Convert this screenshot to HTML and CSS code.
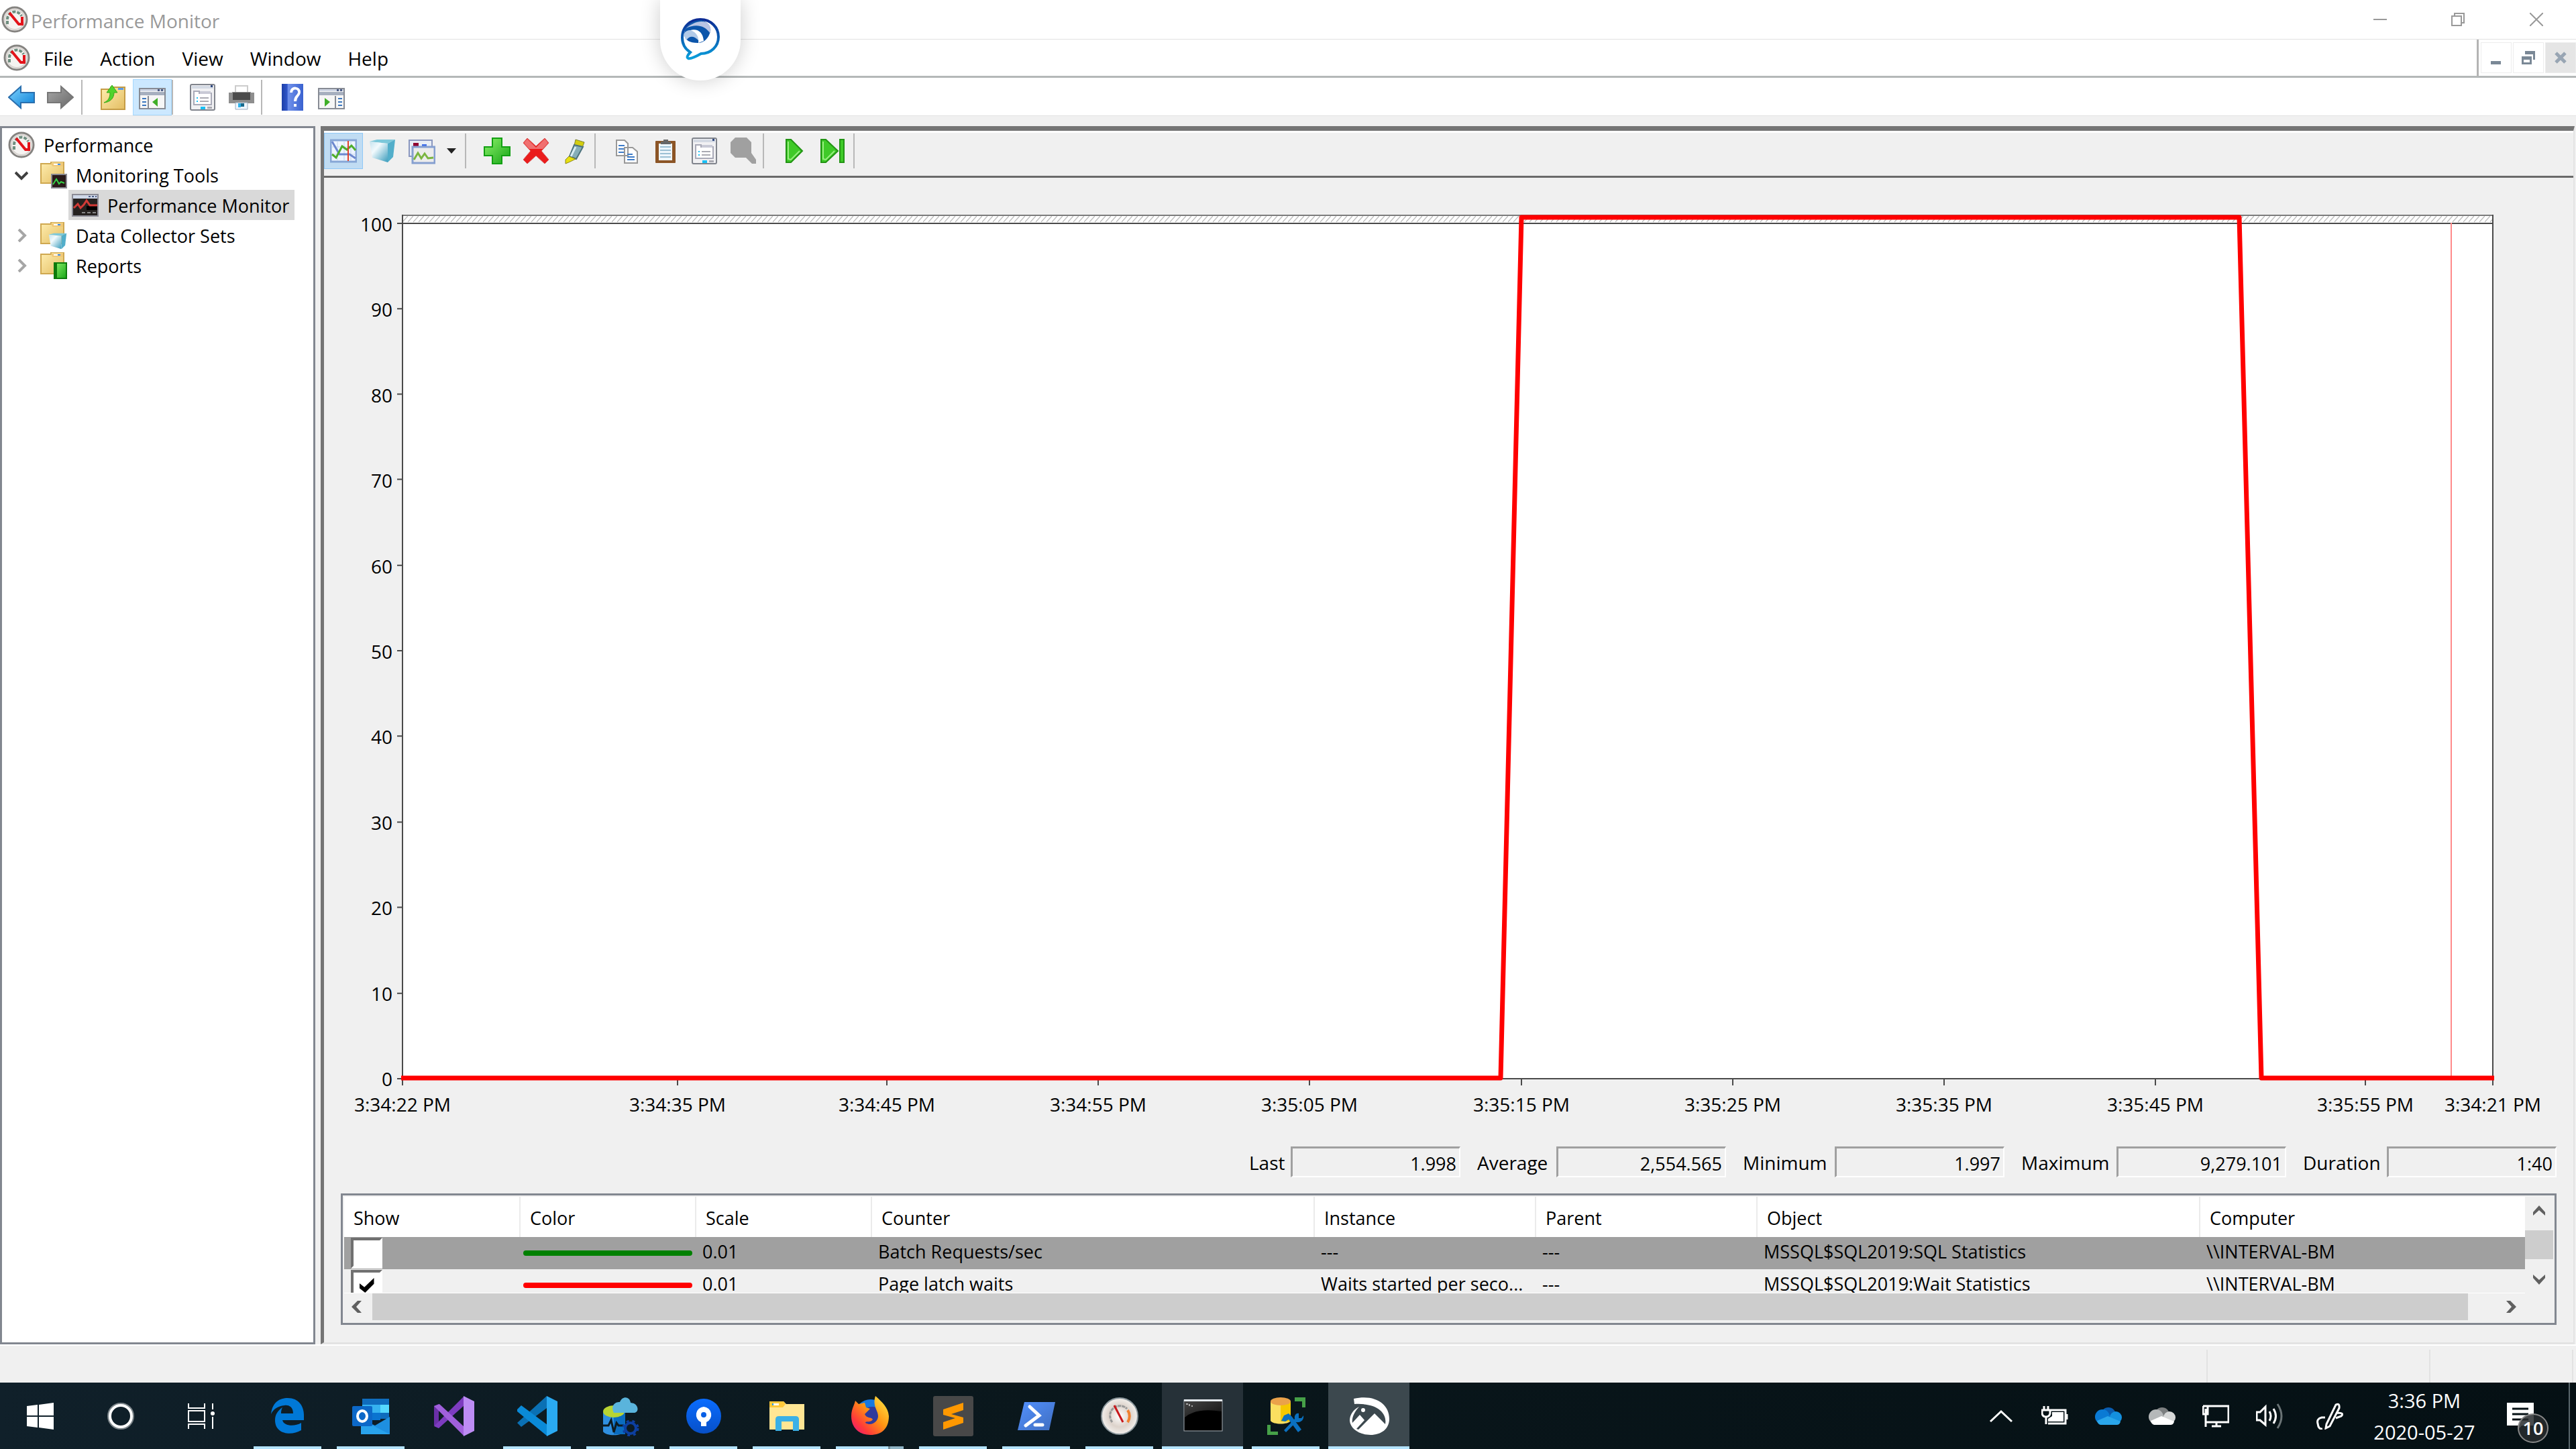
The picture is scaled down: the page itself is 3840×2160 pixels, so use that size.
FILE: index.html
```html
<!DOCTYPE html>
<html lang="en">
<head>
<meta charset="utf-8">
<title>Performance Monitor</title>
<link rel="stylesheet" href="styles.css">
</head>
<body>
<svg class="defs" aria-hidden="true">
  <defs>
    <linearGradient id="gFolder" x1="0" y1="0" x2="1" y2="1"><stop offset="0" stop-color="#ffeeb0"/><stop offset="1" stop-color="#e3bd62"/></linearGradient>
    <linearGradient id="gBlue" x1="0" y1="0" x2="1" y2="1"><stop offset="0" stop-color="#7fd4ff"/><stop offset="1" stop-color="#0a7fd6"/></linearGradient>
    <linearGradient id="gGray" x1="0" y1="0" x2="1" y2="1"><stop offset="0" stop-color="#a8a8a8"/><stop offset="1" stop-color="#686868"/></linearGradient>
    <linearGradient id="gGreen" x1="0" y1="0" x2="1" y2="1"><stop offset="0" stop-color="#8cf06a"/><stop offset="1" stop-color="#16a516"/></linearGradient>
    <linearGradient id="gCube" x1="0" y1="0" x2="1" y2="1"><stop offset="0" stop-color="#c4e2ee"/><stop offset=".35" stop-color="#f2fafd"/><stop offset="1" stop-color="#3a9cbc"/></linearGradient>
    <linearGradient id="gHelp" x1="0" y1="0" x2="1" y2="0"><stop offset="0" stop-color="#1d3fa8"/><stop offset=".25" stop-color="#2f55c8"/><stop offset=".3" stop-color="#6f90ea"/><stop offset="1" stop-color="#3a62d0"/></linearGradient>
    <linearGradient id="gSwirl" x1="0" y1="0" x2="0" y2="1"><stop offset="0" stop-color="#0c2b94"/><stop offset=".5" stop-color="#0a62b4"/><stop offset="1" stop-color="#0a9fdc"/></linearGradient>
    <linearGradient id="gSource" x1="0" y1="0" x2="0" y2="1"><stop offset="0" stop-color="#0a6cff"/><stop offset="1" stop-color="#0750c8"/></linearGradient>
    <linearGradient id="gFox" x1="1" y1="0" x2="0" y2="1"><stop offset="0" stop-color="#fff04a"/><stop offset=".45" stop-color="#ff9412"/><stop offset=".75" stop-color="#ff3a3a"/><stop offset="1" stop-color="#e0108c"/></linearGradient>
    <linearGradient id="gPs" x1="0" y1="0" x2="1" y2="1"><stop offset="0" stop-color="#5391fe"/><stop offset="1" stop-color="#3e6dbf"/></linearGradient>
    <linearGradient id="gCmd" x1="0" y1="0" x2="1" y2="1"><stop offset="0" stop-color="#444"/><stop offset="1" stop-color="#111"/></linearGradient>
    <radialGradient id="gDial"><stop offset="0" stop-color="#fff"/><stop offset=".6" stop-color="#ddd3cb"/><stop offset="1" stop-color="#f2efec"/></radialGradient>
    <symbol id="gauge" viewBox="0 0 40 40">
      <circle cx="20" cy="20" r="18" fill="#f5f3f1" stroke="#858380" stroke-width="3"/>
      <circle cx="20" cy="20" r="15" fill="none" stroke="#d8d4d0" stroke-width="2"/>
      <path d="M9 27V20A11 11 0 0 1 30 15" fill="none" stroke="#6f8f80" stroke-width="4" stroke-dasharray="5 2"/>
      <path d="M12 10L26 27H31V16" fill="none" stroke="#e3131a" stroke-width="4"/>
    </symbol>
    <symbol id="folder" viewBox="0 0 40 40">
      <path d="M1 3H16V0H35V32H1Z" fill="url(#gFolder)" stroke="#cfa850" stroke-width="2"/>
      <path d="M16 2H34V7H18Z" fill="#f0c878"/><path d="M20 3H30V5H20Z" fill="#fff"/><path d="M26 3H30V5H26Z" fill="#3b8ff0"/>
    </symbol>
    <symbol id="cube" viewBox="0 0 40 36">
      <path d="M1 4L12 1H39L28 7Z" fill="#7cc8da"/><path d="M1 4L28 7V35L5 28Z" fill="url(#gCube)"/><path d="M28 7L39 1L36 27L28 35Z" fill="#52aeca"/>
    </symbol>
    <symbol id="props" viewBox="0 0 38 40">
      <rect x="1" y="1" width="36" height="38" rx="2" fill="#f1f1f3" stroke="#80848c" stroke-width="2"/>
      <path d="M3 3H35V7H3Z" fill="#d4dae4"/><path d="M31 2H34V5H31Z" fill="#314a80"/>
      <path d="M6 11H14V14H32V31H6Z" fill="#fff" stroke="#a9aab8" stroke-width="2"/><path d="M15 11H31V15H15Z" fill="#c9cad6"/>
      <path d="M10 20H12V22H10ZM10 25H12V27H10ZM16 34H23V38H16Z" fill="#19c0f5"/><path d="M15 20H28V22H15ZM15 25H28V27H15ZM26 34H33V37H26Z" fill="#aaaab2"/>
    </symbol>
    <symbol id="console" viewBox="0 0 40 32">
      <rect x="1" y="1" width="38" height="30" fill="#f6f6f6" stroke="#878b94" stroke-width="2"/><path d="M2 2H38V5H2Z" fill="#cfd6e4"/><path d="M2 6H38V11H2Z" fill="#a6afbf"/><path d="M28 2H31V5H28ZM33 2H36V5H33Z" fill="#4b5c85"/>
    </symbol>
  </defs>
</svg>

<div class="assist" aria-hidden="true">
  <svg viewBox="0 0 60 66"><path d="M30 3C46 3 57 15 57 29S46 54 31 54C24 58 16 62 12 61C9 60 11 56 15 52C7 47 3 39 3 30C3 14 15 3 30 3Z" fill="#fff" stroke="url(#gSwirl)" stroke-width="4"/><path d="M8 17C14 8 22 4 32 4C42 8 46 13 45 21C42 31 36 38 26 38C14 38 7 34 6 25C6 22 7 19 8 17Z" fill="#0c55aa"/><path d="M9 16C20 6 36 2 43 11C46 16 46 20 44 23C37 12 23 9 9 16Z" fill="#b8c4e4"/><path d="M6 24C8 19 15 18 20 20C25 23 28 29 27 34C20 27 14 27 9 34C7 31 6 28 6 24Z" fill="#b2cae8"/><path d="M15 19C26 16 34 22 35 35L27 38C28 28 24 22 15 19Z" fill="#fff"/></svg>
</div>

<header class="titlebar">
  <svg class="i40"><use href="#gauge"/></svg>
  <h1 class="title">Performance Monitor</h1>
  <div class="winbtns">
    <button aria-label="Minimize"><svg viewBox="0 0 20 20"><path d="M0 10H20"/></svg></button>
    <button aria-label="Restore"><svg viewBox="0 0 20 20"><path d="M1 5H15V19H1ZM5 5V1H19V15H15"/></svg></button>
    <button aria-label="Close"><svg viewBox="0 0 20 20"><path d="M0 0L20 20M20 0L0 20"/></svg></button>
  </div>
</header>

<nav class="menubar">
  <svg class="i40"><use href="#gauge"/></svg>
  <div class="menus"><button>File</button><button>Action</button><button>View</button><button>Window</button><button>Help</button></div>
  <div class="mdi">
    <button aria-label="Minimize child"><svg viewBox="0 0 22 22"><path d="M3 16H18V21H3Z" fill="#7a8896"/></svg></button>
    <button aria-label="Restore child"><svg viewBox="0 0 22 22"><path d="M6 1H21V14H18V6H6ZM1 9H16V21H1ZM4 14V18H13V14Z" fill="#7a8896" fill-rule="evenodd"/></svg></button>
    <button class="off" aria-label="Close child"><svg viewBox="0 0 22 22"><path d="M4 4L18 18M18 4L4 18" stroke="#98a5b3" stroke-width="5"/></svg></button>
  </div>
</nav>

<div class="toolbar">
  <button class="tb" aria-label="Back"><svg viewBox="0 0 40 36"><path d="M1 18L19 2V11H39V26H19V34Z" fill="url(#gBlue)" stroke="#2a6fae" stroke-width="2"/></svg></button>
  <button class="tb" aria-label="Forward"><svg viewBox="0 0 40 36"><path d="M39 18L21 2V11H1V26H21V34Z" fill="url(#gGray)" stroke="#777" stroke-width="2"/></svg></button>
  <span class="sep lead"></span>
  <button class="tb up" aria-label="Up one level"><svg viewBox="0 0 40 40"><path d="M3 8H17V5H38V38H3Z" fill="url(#gFolder)" stroke="#c59c45" stroke-width="2"/><path d="M28 6H36V9H28Z" fill="#5a9be8"/><path d="M7 28C14 25 16 20 16 13H11L19 2L27 13H22C22 21 17 27 7 28Z" fill="#4fd32c" stroke="#38a818" stroke-width="1"/></svg></button>
  <button class="tb on" aria-label="Show or hide console tree"><svg viewBox="0 0 40 40"><use href="#console" y="6" width="40" height="32"/><path d="M14 18V37" stroke="#878b94" stroke-width="2"/><path d="M5 21H11V23H5ZM5 26H11V28H5ZM5 31H11V33H5Z" fill="#3c78c0"/><path d="M28 21V34L20 27Z" fill="#3fae28"/></svg></button>
  <span class="sep"></span>
  <button class="tb props" aria-label="Properties"><svg viewBox="0 0 38 40"><use href="#props"/></svg></button>
  <button class="tb" aria-label="Print"><svg viewBox="0 0 40 40"><path d="M11 3H29V14H11Z" fill="#fff" stroke="#ccc" stroke-width="2"/><path d="M1 13H6V12H34V13H39V29H1Z" fill="#8e8e8e"/><path d="M7 13H33V24H7Z" fill="#4b4b4b"/><path d="M11 28H29V38H11Z" fill="#eef6ff" stroke="#9ab" stroke-width="1"/><path d="M15 29H19V35H15Z" fill="#2fb0e8"/><path d="M19 29H24V34H19Z" fill="#18698c"/></svg></button>
  <span class="sep"></span>
  <button class="tb help" aria-label="Help"><svg viewBox="0 0 40 40"><path d="M4 0H36V40H4Z" fill="url(#gHelp)"/><path d="M18 13C18 4 31 5 30 13C29 19 24 18 24 26M24 30V34" fill="none" stroke="#fff" stroke-width="4"/></svg></button>
  <button class="tb" aria-label="Show or hide action pane"><svg viewBox="0 0 40 40"><use href="#console" y="6" width="40" height="32"/><path d="M26 18V37" stroke="#878b94" stroke-width="2"/><path d="M30 21H36V23H30ZM30 26H36V28H30ZM30 31H36V33H30Z" fill="#3c78c0"/><path d="M10 21V34L18 27Z" fill="#3fae28"/></svg></button>
</div>

<main class="main">
  <aside class="tree">
    <ul>
      <li><svg class="i40"><use href="#gauge"/></svg><span>Performance</span></li>
      <li class="l1"><svg class="chev" viewBox="0 0 20 20"><path d="M1 6L10 15L19 6" stroke="#404040"/></svg><svg class="i40" viewBox="0 0 40 40"><use href="#folder" width="40" height="40"/><rect x="17" y="19" width="22" height="20" fill="#2a1a1a" stroke="#8a8a92" stroke-width="2"/><path d="M19 34L24 26L28 33L31 30L36 32" fill="none" stroke="#35d046" stroke-width="2"/></svg><span>Monitoring Tools</span></li>
      <li class="l2"><a href="#chart" class="sel"><svg class="i40" viewBox="0 0 40 40"><rect x="1" y="4" width="38" height="32" fill="#262220" stroke="#8b8b95" stroke-width="2"/><path d="M2 5H38V10H2Z" fill="#cfd8e8"/><path d="M25 6H28V8H25ZM30 6H33V8H30ZM35 6H37V8H35Z" fill="#4b5c85"/><path d="M22 21H38V27H22Z" fill="#000"/><path d="M3 24L9 18L13 24L18 19L22 13L27 20H38" fill="none" stroke="#d33a36" stroke-width="3"/><path d="M15 30H20V32H15ZM23 30H28V32H23ZM31 30H36V32H31Z" fill="#888"/></svg><span>Performance Monitor</span></a></li>
      <li class="l1"><svg class="chev" viewBox="0 0 20 20"><path d="M6 1L15 10L6 19" stroke="#a6a6a6"/></svg><svg class="i40" viewBox="0 0 40 40"><use href="#folder" width="40" height="40"/><use href="#cube" x="12" y="16" width="28" height="25"/></svg><span>Data Collector Sets</span></li>
      <li class="l1"><svg class="chev" viewBox="0 0 20 20"><path d="M6 1L15 10L6 19" stroke="#a6a6a6"/></svg><svg class="i40" viewBox="0 0 40 40"><use href="#folder" width="40" height="40"/><rect x="21" y="16" width="18" height="23" fill="url(#gGreen)" stroke="#0c7a0c" stroke-width="2"/><path d="M21 16H25V39H21Z" fill="#0c7a0c"/></svg><span>Reports</span></li>
    </ul>
  </aside>

  <section class="pane" id="chart">
    <div class="ptools">
      <button class="tb on" aria-label="View current activity"><svg viewBox="0 0 40 40"><rect x="1" y="4" width="38" height="32" fill="#eef5ff" stroke="#86a6d6" stroke-width="3"/><path d="M11 5V35M21 5V35M31 5V35M2 14H38M2 25H38" stroke="#c3d3ec" stroke-width="1"/><path d="M3 6L14 25H29L38 31" fill="none" stroke="#6d88cf" stroke-width="3"/><path d="M3 25L9 30L18 13L25 18L32 12L38 19" fill="none" stroke="#4fae2c" stroke-width="3"/><path d="M27 5V35" stroke="#e2402a" stroke-width="2"/></svg></button>
      <button class="tb" aria-label="View log data"><svg viewBox="0 0 40 40"><use href="#cube" y="2" width="40" height="36"/></svg></button>
      <button class="tb wide" aria-label="Change graph type"><svg viewBox="0 0 40 40"><rect x="1" y="4" width="34" height="24" fill="#e8edf5" stroke="#8a97bf" stroke-width="2"/><path d="M7 8H15V14H7Z" fill="#900030"/><path d="M20 10H27V14H20Z" fill="#3f6ee8"/><rect x="6" y="14" width="33" height="24" fill="#ececec" stroke="#86a0d0" stroke-width="3"/><path d="M8 33L14 23L19 31L24 24L29 31L37 30" fill="none" stroke="#7ab540" stroke-width="3"/></svg><svg class="drop" viewBox="0 0 16 8"><path d="M1 0H15L8 8Z"/></svg></button>
      <span class="sep"></span>
      <button class="tb add" aria-label="Add"><svg viewBox="0 0 40 40"><path d="M13 1H27V14H39V27H27V39H13V27H1V14H13Z" fill="url(#gGreen)" stroke="#12a012" stroke-width="2"/></svg></button>
      <button class="tb" aria-label="Delete"><svg viewBox="0 0 40 40"><path d="M7 1L20 13L33 1L39 8L28 20L39 33L33 39L20 27L7 39L1 33L12 20L1 8Z" fill="#ea1c1c" stroke="#d85050" stroke-width="1"/><path d="M7 2L20 15L33 2L38 8L30 17H10L2 8Z" fill="#f07070"/></svg></button>
      <button class="tb" aria-label="Highlight"><svg viewBox="0 0 40 40"><path d="M21 3L34 7L31 15L19 12Z" fill="#d3cd10" stroke="#7d8430" stroke-width="1"/><path d="M19 11L32 14L22 32L12 28Z" fill="#86aeb8" stroke="#4c727c" stroke-width="2"/><path d="M21 14L14 28" stroke="#d8ecf2" stroke-width="3"/><path d="M11 28L21 32L13 36L6 39V33Z" fill="#e8e010" stroke="#8c8818" stroke-width="1"/></svg></button>
      <span class="sep"></span>
      <button class="tb copy" aria-label="Copy"><svg viewBox="0 0 40 40"><path d="M5 4H17L22 9V27H5ZM17 15H29L36 21V38H17Z" fill="#fff" stroke="#999" stroke-width="2"/><path d="M8 11H17V13H8ZM8 16H16V18H8ZM8 21H16V23H8ZM21 24H29V26H21ZM21 28H32V30H21ZM21 32H32V34H21Z" fill="#3e7cc8"/></svg></button>
      <button class="tb" aria-label="Paste"><svg viewBox="0 0 40 40"><rect x="5" y="5" width="30" height="33" rx="1" fill="#8c5526"/><path d="M10 9H30V34H10Z" fill="#eef6fb"/><path d="M12 14H28M12 19H28M12 24H28M12 29H28" stroke="#9cc0d4" stroke-width="2"/><path d="M13 10V6H17V3H24V6H28V10Z" fill="#666"/></svg></button>
      <button class="tb" aria-label="Properties"><svg viewBox="0 0 38 40"><use href="#props"/></svg></button>
      <button class="tb" aria-label="Zoom"><svg viewBox="0 0 40 40"><path d="M8 0H25L32 7V23L39 33V39H33L24 30H8L1 23V7Z" fill="#a0a0a0"/></svg></button>
      <span class="sep"></span>
      <button class="tb play" aria-label="Freeze or unfreeze display"><svg viewBox="0 0 40 40"><path d="M7 3H14L31 20L14 37H7Z" fill="#3fca28" stroke="#229414" stroke-width="2"/><path d="M10 6V32L14 33L27 20" fill="none" stroke="#98ee80" stroke-width="2"/></svg></button>
      <button class="tb" aria-label="Update data"><svg viewBox="0 0 40 40"><path d="M1 3H8L26 20L8 37H1ZM29 3H35V37H29Z" fill="#3fca28" stroke="#229414" stroke-width="2"/><path d="M4 6V32L8 33L21 20" fill="none" stroke="#98ee80" stroke-width="2"/></svg></button>
      <span class="sep"></span>
    </div>

    <div class="chart">
      <div class="yaxis"><span>100</span><span>90</span><span>80</span><span>70</span><span>60</span><span>50</span><span>40</span><span>30</span><span>20</span><span>10</span><span>0</span></div>
      <div class="plot">
        <svg viewBox="0 0 3116 1286" preserveAspectRatio="none">
          <defs><pattern id="hatch" width="8" height="12" patternUnits="userSpaceOnUse"><path d="M0 11L8 2" stroke="#a8a8a8" stroke-width="1"/></pattern></defs>
          <rect width="3116" height="1286" fill="#fff"/>
          <rect width="3116" height="12" fill="url(#hatch)"/>
          <path d="M0 1H3116" stroke="#7c7c7c" stroke-width="2"/>
          <path d="M0 0V1296M3116 0V1296M-8 13H3116M-8 1286H3116" class="axis"/>
          <path d="M-8 140H0M-8 267H0M-8 394H0M-8 522H0M-8 649H0M-8 776H0M-8 904H0M-8 1031H0M-8 1159H0" class="axis"/>
          <path d="M410 1286V1296M722 1286V1296M1037 1286V1296M1352 1286V1296M1668 1286V1296M1983 1286V1296M2298 1286V1296M2613 1286V1296M2926 1286V1296" class="axis"/>
          <path d="M3054 12V1286" stroke="#ff8a8a" stroke-width="2"/>
          <path d="M-2 1285H1637L1668 4H2738L2771 1285H3118" fill="none" stroke="#f00" stroke-width="7" stroke-linejoin="round"/>
        </svg>
      </div>
      <div class="xaxis"><span>3:34:22 PM</span><span>3:34:35 PM</span><span>3:34:45 PM</span><span>3:34:55 PM</span><span>3:35:05 PM</span><span>3:35:15 PM</span><span>3:35:25 PM</span><span>3:35:35 PM</span><span>3:35:45 PM</span><span>3:35:55 PM</span><span>3:34:21 PM</span></div>
    </div>

    <form class="stats">
      <label for="last">Last</label><input id="last" readonly value="1.998">
      <label for="avg">Average</label><input id="avg" readonly value="2,554.565">
      <label for="min">Minimum</label><input id="min" readonly value="1.997">
      <label for="max">Maximum</label><input id="max" readonly value="9,279.101">
      <label for="dur">Duration</label><input id="dur" readonly value="1:40">
    </form>

    <div class="legend">
      <div class="rows">
        <table>
          <colgroup><col class="c1"><col class="c1"><col class="c1"><col class="c3"><col class="c2"><col class="c2"><col class="c3"><col></colgroup>
          <thead><tr><th>Show</th><th>Color</th><th>Scale</th><th>Counter</th><th>Instance</th><th>Parent</th><th>Object</th><th>Computer</th></tr></thead>
          <tbody>
            <tr class="picked"><td class="show"><input type="checkbox" aria-label="Show Batch Requests/sec"></td><td class="swatch"><hr class="green"></td><td>0.01</td><td>Batch Requests/sec</td><td>---</td><td>---</td><td>MSSQL$SQL2019:SQL Statistics</td><td>\\INTERVAL-BM</td></tr>
            <tr><td class="show"><input type="checkbox" checked aria-label="Show Page latch waits"></td><td class="swatch"><hr class="red"></td><td>0.01</td><td>Page latch waits</td><td>Waits started per seco...</td><td>---</td><td>MSSQL$SQL2019:Wait Statistics</td><td>\\INTERVAL-BM</td></tr>
          </tbody>
        </table>
      </div>
      <div class="vbar"><svg viewBox="0 0 20 16"><path d="M1 15V10L10 0L19 10V15L10 7Z"/></svg><i></i><svg viewBox="0 0 20 16"><path d="M1 1V6L10 16L19 6V1L10 9Z"/></svg></div>
      <div class="hbar"><svg viewBox="0 0 16 20"><path d="M15 1H9L0 10L9 19H15L7 10Z"/></svg><i></i><svg viewBox="0 0 16 20"><path d="M1 1H7L16 10L7 19H1L9 10Z"/></svg></div>
    </div>
  </section>
</main>

<div class="status"><span></span><span></span><span></span></div>

<footer class="taskbar">
  <div class="sys">
    <button aria-label="Start"><svg viewBox="0 0 40 40"><path d="M0 5L16 3V19H0ZM18 3L40 0V19H18ZM0 21H16V37L0 35ZM18 21H40V40L18 37Z" fill="#fff"/></svg></button>
    <button aria-label="Cortana"><svg viewBox="0 0 40 40"><circle cx="20" cy="20" r="18" fill="none" stroke="#7c858a" stroke-width="4"/><circle cx="20" cy="20" r="16" fill="none" stroke="#fff" stroke-width="4"/></svg></button>
    <button aria-label="Task view"><svg viewBox="0 0 40 40"><path d="M1 1V8H25V1M1 12H25V28H1ZM1 39V32H25V39M37 1V10M37 21V39" fill="none" stroke="#fff" stroke-width="2"/><circle cx="37" cy="16" r="3" fill="#fff"/></svg></button>
  </div>
  <div class="apps">
    <button class="run" aria-label="Edge"><svg viewBox="0 0 60 60"><path d="M5 27C7 9 18 3 30 3C46 3 54 15 54 29V36H22C24 45 40 46 50 40V51C35 60 11 57 11 36C11 27 16 21 22 17C20 21 20 24 20 26H38C38 15 30 13 25 14C15 15 8 20 5 27Z" fill="#0078d7"/></svg></button>
    <button class="run" aria-label="Outlook"><svg viewBox="0 0 60 60"><path d="M17 4H57V34H17Z" fill="#0f6cbd"/><path d="M17 13H57V25H17Z" fill="#35b2f0"/><path d="M44 13H57V25H44Z" fill="#55d8ff"/><path d="M17 25H44V36H17Z" fill="#0a74d0"/><path d="M15 34L36 44L58 31V57H15Z" fill="#1e8fe0"/><path d="M15 35L58 57H15Z" fill="#29a3ec"/><rect x="2" y="15" width="30" height="30" rx="2" fill="#0c68c8"/><ellipse cx="17" cy="30" rx="7" ry="8" fill="none" stroke="#fff" stroke-width="4"/></svg></button>
    <button aria-label="Visual Studio"><svg viewBox="0 0 60 60"><path d="M0 15L7 12V48L0 44Z" fill="#6a2fa8"/><path d="M7 48L45 14V0L0 45Z" fill="#7d3cc0"/><path d="M0 15L8 12L45 46V60Z" fill="#a060dc"/><path d="M44 0L60 8V52L44 60Z" fill="#bd8cf4"/></svg></button>
    <button class="run" aria-label="Visual Studio Code"><svg viewBox="0 0 60 60"><path d="M0 40L44 0V18L6 46Z" fill="#0a70b4"/><path d="M0 20L6 14L45 43V60L0 23Z" fill="#0a8ad8"/><path d="M44 0L60 8V52L44 60Z" fill="#2aaaf2"/></svg></button>
    <button class="run" aria-label="Database manager"><svg viewBox="0 0 60 60"><path d="M4 24V53C8 60 32 60 36 53V24Z" fill="#2f8fe0"/><path d="M20 24H37V57H20Z" fill="#0a6cc0"/><ellipse cx="20" cy="23" rx="16" ry="9" fill="#b8d432"/><path d="M20 25C14 13 24 8 29 9C33-1 44 1 45 10C58 11 58 25 50 25Z" fill="#5ab4dc"/><path d="M4 44H12L16 36L20 54L24 40L27 44H35" fill="none" stroke="#0d1b21" stroke-width="3"/><circle cx="45" cy="48" r="8" fill="none" stroke="#0d3fa0" stroke-width="4"/><circle cx="45" cy="48" r="11" fill="none" stroke="#0d3fa0" stroke-width="3" stroke-dasharray="4 5"/></svg></button>
    <button class="run" aria-label="Sourcetree"><svg viewBox="0 0 60 60"><circle cx="30" cy="30" r="26" fill="url(#gSource)"/><path d="M30 16A12 12 0 0 0 26 39V45H34V39A12 12 0 0 0 30 16ZM30 24A4 4 0 1 1 30 32A4 4 0 1 1 30 24Z" fill="#fff" fill-rule="evenodd"/></svg></button>
    <button class="run" aria-label="File Explorer"><svg viewBox="0 0 60 60"><path d="M4 8H25L29 12H56V50H4Z" fill="#ffe694"/><path d="M4 8H25L28 12L24 17H4Z" fill="#ffc83a"/><path d="M8 11H18V14H8Z" fill="#fff"/><path d="M8 11H10V14H8Z" fill="#2a9ce0"/><path d="M13 52V35Q13 30 18 30H43Q48 30 48 35V52H39V38H22V52Z" fill="#3ab0e6"/></svg></button>
    <button class="run more" aria-label="Firefox"><svg viewBox="0 0 60 60"><circle cx="31" cy="29" r="24" fill="#1678e0"/><circle cx="33" cy="34" r="18" fill="#303a9c"/><path d="M8 7L13 12L22 10L24 17L30 19L22 27C25 34 32 31 34 35C31 40 22 37 23 40C32 46 42 38 42 30C42 21 33 15 38 0C48 9 57 17 58 30C58 48 48 58 30 58C12 58 2 46 2 30C2 20 6 15 8 7Z" fill="url(#gFox)"/></svg></button>
    <button class="run" aria-label="Sublime Text"><svg viewBox="0 0 60 60"><rect width="60" height="60" rx="3" fill="#484848"/><path d="M15 20L45 10V21L27 27L45 32V40L15 50V39L33 33L15 28Z" fill="#ff9800"/></svg></button>
    <button class="run" aria-label="PowerShell"><svg viewBox="0 0 60 60"><path d="M12 9H58L49 51H2Z" fill="url(#gPs)"/><path d="M20 16L34 29L14 44M28 43H39" fill="none" stroke="#fff" stroke-width="5" stroke-linecap="round"/></svg></button>
    <button class="run" aria-label="Performance Monitor"><svg viewBox="0 0 60 60"><circle cx="30" cy="30" r="27" fill="url(#gDial)" stroke="#8b979c" stroke-width="2"/><path d="M19 39A16 16 0 0 1 17 23A15 15 0 0 1 41 19" fill="none" stroke="#999" stroke-width="3" stroke-dasharray="5 1"/><path d="M42 21A16 16 0 0 1 42 39" fill="none" stroke="#f08030" stroke-width="4"/><path d="M22 14L35 39" stroke="#c8181c" stroke-width="3"/></svg></button>
    <button class="run full dim" aria-label="Command Prompt"><svg viewBox="0 0 60 60"><rect x="2" y="6" width="57" height="46" fill="#000" stroke="#a8b0b6" stroke-width="1"/><path d="M3 8H58V23Q20 17 3 32Z" fill="url(#gCmd)"/><path d="M2 5H59V8H2Z" fill="#e4eaee"/><path d="M5 12H8M10 12V15M13 15H15" stroke="#aaa" stroke-width="2"/></svg></button>
    <button class="run" aria-label="Management Studio"><svg viewBox="0 0 60 60"><path d="M7 8V37C11 43 33 43 37 37V8Z" fill="#fadf60"/><path d="M22 8H37V38H22Z" fill="#f5c800"/><ellipse cx="22" cy="8" rx="15" ry="6" fill="#eaa24a"/><path d="M43 2H59V17H54V8H43ZM2 43H7V53H18V58H2Z" fill="#46a048"/><path d="M27 29L34 26L39 31L53 50L48 54L34 35L29 38L23 37Z" fill="#0a70c0"/><path d="M45 39L30 54L27 51L43 34C42 28 46 25 49 26V33H53L56 29C57 36 52 40 45 39Z" fill="#0a70c0"/></svg></button>
    <button class="run full lit" aria-label="Snapshot"><svg viewBox="0 0 60 60"><path d="M7 4C39-3 60 12 60 34C60 49 48 58 32 58S2 49 1 37C1 29 5 21 15 16C6 26 4 34 5 40L16 28L23 36L11 49L14 50L38 26L54 42C57 26 43 10 8 12Z" fill="#fff"/><circle cx="21" cy="21" r="3" fill="#fff"/></svg></button>
  </div>
  <div class="tray">
    <button aria-label="Show hidden icons"><svg viewBox="0 0 40 40"><path d="M4 28L20 13L36 28"/></svg></button>
    <button aria-label="Power"><svg viewBox="0 0 40 40"><path d="M12 11H36V31H10M38 17V25M7 32V22M4 5V10M10 5V10M1 11H13V16Q12 21 7 21T1 16Z"/><path d="M16 14H33V28H10V24L16 20Z" fill="#fff" stroke="none"/></svg></button>
    <button aria-label="OneDrive"><svg viewBox="0 0 40 40"><g stroke="none"><circle cx="20" cy="18" r="11" fill="#0a5cb0"/><circle cx="11" cy="21" r="11" fill="#0a7ad4"/><circle cx="31" cy="22" r="9" fill="#1490df"/><path d="M3 27L19 20L38 28C37 32 35 33 32 33H10C6 33 4 31 3 27Z" fill="#2aa6ea"/></g></svg></button>
    <button aria-label="OneDrive personal"><svg viewBox="0 0 40 40"><g stroke="none"><circle cx="20" cy="18" r="11" fill="#7c7f80"/><circle cx="11" cy="21" r="11" fill="#b5b8b9"/><circle cx="31" cy="22" r="9" fill="#d6d8d8"/><path d="M3 27L19 20L38 28C37 32 35 33 32 33H10C6 33 4 31 3 27Z" fill="#fff"/></g></svg></button>
    <button aria-label="Network"><svg viewBox="0 0 40 40"><path d="M1 5H39V29H6M1 5V17H8V5M5 9V36M21 29V35M14 35H28"/></svg></button>
    <button aria-label="Volume"><svg viewBox="0 0 40 40"><path d="M1 14H6L14 6V33L6 26H1ZM20 13Q24 20 20 27M26 9Q33 20 26 31"/><path d="M32 2Q44 20 32 38" stroke="#6a7375"/></svg></button>
    <button class="pen" aria-label="Windows Ink"><svg viewBox="0 0 40 40"><path d="M15 32L29 3Q35 0 34 8L20 35L14 38ZM13 22H8Q0 24 2 31Q3 40 9 39M31 15Q42 15 37 20L29 23"/></svg></button>
    <div class="clock"><time>3:36 PM</time><time>2020-05-27</time></div>
    <button class="note" aria-label="Notifications"><svg viewBox="0 0 40 40"><path d="M0 0H40V34H22L17 40V34H0Z" fill="#fff" stroke="none"/><path d="M8 9H32M8 17H32M8 25H32" stroke="#051014"/></svg><b>10</b></button>
    <span class="desk"></span>
  </div>
</footer>
</body>
</html>
```
FILE: styles.css
```css
* { box-sizing: border-box; }
body {
  margin: 0; min-height: 100vh; display: flex; flex-direction: column;
  background: #f0f0f0; color: #000;
  font: 27px/36px "Open Sans", "Noto Sans", sans-serif;
}
button { padding: 0; border: 0; background: none; font: inherit; color: inherit; display: flex; align-items: center; justify-content: center; }
svg { display: block; flex: none; }
.defs { width: 0; height: 0; position: absolute; }
.i40 { width: 40px; height: 40px; }

.assist {
  position: absolute; left: 984px; top: 0; width: 120px; height: 120px; z-index: 2;
  display: flex; justify-content: center; padding-top: 26px;
  background: #fff; border-radius: 0 0 60px 60px; box-shadow: 0 0 30px rgba(0, 0, 0, .2);
}
.assist svg { width: 60px; height: 66px; }

.titlebar { display: flex; align-items: center; height: 59px; padding-left: 2px; background: #fff; border-bottom: 1px solid #e2e2e2; }
.title { margin: 0 0 0 4px; flex: 1; font-size: 28px; font-weight: 400; color: #999; line-height: 40px; padding-top: 4px; }
.winbtns { display: flex; }
.winbtns button { width: 116px; height: 58px; }
.winbtns button:last-child { width: 118px; }
.winbtns svg { width: 20px; height: 20px; fill: none; stroke: #999; stroke-width: 2; }

.menubar { display: flex; align-items: center; height: 57px; padding-left: 5px; background: #fff; border-bottom: 3px solid #b4b8b8; }
.menus { display: flex; flex: 1; align-self: stretch; font-size: 28px; }
.menus button { padding: 2px 20px 0; }
.mdi { display: flex; gap: 2px; align-self: stretch; align-items: center; border-left: 3px solid #b4b4b4; padding-left: 3px; }
.mdi button { width: 46px; height: 46px; border: 1px solid #ededed; }
.mdi .off { background: #e5e5e5; }
.mdi svg { width: 22px; height: 22px; }

.tb { width: 58px; height: 54px; }
.tb svg { width: 40px; height: 40px; }
.sep { width: 2px; height: 52px; background: #b8b8b8; }
.toolbar { display: flex; align-items: center; height: 57px; padding: 2px 3px 0; background: #fff; border-bottom: 1px solid #e2e2e2; }
.toolbar .lead { margin-left: 2px; }
.toolbar .up { margin-left: 16px; }
.toolbar .on { margin-left: 1px; background: #cce8ff; border: 1px solid #a5d8ff; }
.toolbar .props { margin-left: 15px; }
.toolbar .help { margin-left: 16px; }

.main { flex: 1; display: flex; gap: 8px; padding-top: 15px; }
.tree { flex: 0 0 470px; border: 3px solid #828790; background: #fff; }
.tree ul { list-style: none; margin: 0; padding: 2px 0 0; }
.tree li { display: flex; align-items: center; height: 45px; padding-left: 9px; }
.tree span { padding: 2px 8px 0 13px; }
.tree .l1 { padding-left: 19px; }
.tree .l2 { padding-left: 99px; }
.chev { width: 20px; height: 20px; margin-right: 18px; fill: none; stroke-width: 4; }
.sel { display: flex; align-items: center; height: 45px; padding-left: 5px; background: #d9d9d9; color: inherit; text-decoration: none; }

.pane { flex: 1; display: flex; flex-direction: column; margin-right: 2px; border-style: solid; border-width: 7px 2px 3px 5px; border-color: #747474 #e3e3e3 #e3e3e3 #747474; }
.ptools { display: flex; align-items: center; height: 70px; padding-bottom: 10px; border-top: 3px solid #fff; border-bottom: 3px solid #696969; }
.ptools .on { background: #c0dcf3; border: 1px solid #90c8f6; }
.ptools .wide { width: 94px; gap: 16px; padding-right: 2px; }
.ptools .drop { width: 16px; height: 8px; fill: #222; }
.ptools .add, .ptools .copy, .ptools .play { margin-left: 17px; }

.chart { flex: 1; display: grid; grid-template-columns: 117px 1fr; grid-template-rows: 1fr 101px; padding: 55px 120px 0 0; font-size: 28px; }
.yaxis { display: flex; flex-direction: column; justify-content: space-between; padding: 14px 15px 0 0; }
.yaxis span { height: 0; display: flex; align-items: center; justify-content: flex-end; }
.plot { min-height: 400px; position: relative; }
.plot svg { position: absolute; inset: 0; width: 100%; height: 100%; overflow: visible; }
.axis { fill: none; stroke: #4a4a4a; stroke-width: 2; }
.xaxis { grid-column: 2; display: grid; grid-template-columns: 410fr 312fr 315fr 315fr 316fr 315fr 315fr 315fr 313fr 190fr 0; padding-top: 20px; }
.xaxis span { width: 0; display: flex; justify-content: center; white-space: nowrap; }

.stats { display: grid; justify-content: end; grid-template-columns: 62px 253px 143px 253px 162px 253px 167px 253px 150px 253px; margin: 0 25px 0 0; height: 46px; font-size: 28px; }
.stats label { display: flex; align-items: center; padding-left: 25px; margin-top: 2px; }
.stats label:first-child { padding-left: 0; }
.stats input { min-width: 0; width: 100%; border: 2px solid; border-width: 3px 2px 2px 3px; border-color: #a0a0a0 #fff #fff #a0a0a0; background: #f0f0f0; font: inherit; font-size: 27px; text-align: right; padding: 4px 4px 0; border-radius: 0; }

.legend { display: grid; grid-template-columns: 1fr 42px; grid-template-rows: 144px 40px; margin: 24px 25px 26px; border: 3px solid #828790; padding: 2px 2px 4px; }
.rows { overflow: hidden; border-bottom: 1px solid #fff; }
table { width: 100%; table-layout: fixed; border-collapse: collapse; }
col.c1 { width: 262px; }
col.c2 { width: 330px; }
col.c3 { width: 660px; }
th { height: 60px; padding: 4px 14px 0; background: #fff; text-align: left; font-weight: 400; border-right: 2px solid #ebebeb; }
th:last-child { border: 0; }
td { height: 48px; padding: 0 0 4px 10px; white-space: nowrap; overflow: hidden; }
.picked { background: #a0a0a0; }
td.show { padding: 0 0 0 10px; }
.show input { appearance: none; display: grid; place-items: center; margin: 0; width: 47px; height: 46px; background: #fff; border: 4px solid; border-color: #707070 #fff #fff #707070; }
.show input:checked::before { content: ""; width: 22px; height: 22px; background: #000; clip-path: polygon(0 35%, 35% 62%, 100% 0, 100% 40%, 40% 100%, 0 68%); }
td.swatch { padding: 0 5px; }
.swatch hr { margin: 0; height: 8px; border: 0; border-radius: 4px; }
.green { background: #008000; }
.red { background: #f00; }
.vbar { display: flex; flex-direction: column; align-items: center; padding: 13px 0; }
.vbar svg { width: 20px; height: 16px; fill: #606060; }
.vbar i { width: 100%; height: 43px; margin: 21px 0 22px; background: #cdcdcd; }
.hbar { display: flex; align-items: center; padding-left: 11px; }
.hbar svg { width: 16px; height: 20px; fill: #606060; }
.hbar i { flex: 1; height: 40px; margin: 0 56px 0 15px; background: #cdcdcd; }
.hbar svg:last-child { margin-right: 13px; }

.status { height: 57px; display: flex; justify-content: flex-end; padding: 6px 4px 0 0; border-top: 2px solid #fff; }
.status span { border-right: 2px solid #e2e2e2; flex: 1; }
.status span:nth-child(2) { flex: 0 0 332px; }
.status span:nth-child(3) { flex: 0 0 213px; }

.taskbar { height: 99px; display: flex; justify-content: space-between; background: linear-gradient(90deg, #10202a, #0a171c 40%, #051014); color: #fff; }
.sys, .apps, .tray { display: flex; }
.sys { margin-right: 8px; }
.sys button { width: 120px; }
.sys svg, .tray svg { width: 40px; height: 40px; }
.apps { gap: 3px; flex: 1; }
.apps button { width: 121px; }
.apps svg { width: 60px; height: 60px; }
.apps .run { background: linear-gradient(#b3e3ff, #b3e3ff) center bottom / 101px 4px no-repeat; }
.apps .more { background-image: linear-gradient(90deg, #b3e3ff 78px, #6f8c98 78px, #6f8c98 81px, #8fb4c5 81px); }
.apps .full { background-size: 100% 4px; }
.apps .dim { background-color: #263138; }
.apps .lit { background-color: #3c484e; }
.tray { align-items: center; }
.tray button { width: 80px; height: 99px; }
.tray svg { fill: none; stroke: #fff; stroke-width: 3; }
.tray .pen { width: 100px; }
.clock { width: 182px; display: flex; flex-direction: column; gap: 11px; text-align: center; font-size: 29px; padding-top: 2px; }
.tray .note { width: 124px; padding-right: 20px; position: relative; }
.note b { position: absolute; left: 48px; top: 46px; width: 46px; height: 44px; border: 2px solid #888; border-radius: 50%; background: rgba(40, 44, 46, .85); font-size: 27px; line-height: 40px; font-weight: 600; }
.desk { width: 2px; height: 99px; margin-right: 9px; background: #59666b; }
```
